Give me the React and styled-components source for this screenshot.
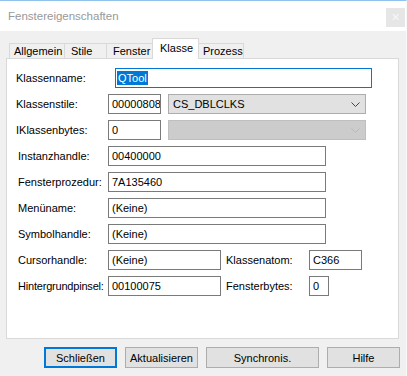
import React from 'react'
import styled, { createGlobalStyle } from 'styled-components'

const GlobalStyle = createGlobalStyle`
    html, body {
        margin: 0;
        padding: 0;
        background: #f0f0f0;
    }
    body {
        font-family: "Liberation Sans", Arial, sans-serif;
        font-size: 11px;
        color: #000;
    }
`

const tabs = [
    { name: 'Allgemein', width: 56, pad: 5 },
    { name: 'Stile', width: 43, pad: 7 },
    { name: 'Fenster', width: 49, pad: 7 },
    { name: 'Klasse', width: 47, pad: 8, active: true },
    { name: 'Prozess', width: 46, pad: 5 },
]

const buttons = [
    { name: 'Schließen', width: 73, primary: true },
    { name: 'Aktualisieren', width: 73 },
    { name: 'Synchronis.', width: 113 },
    { name: 'Hilfe', width: 73 },
]

function Chevron({ color }) {
    return (
        <svg width="9" height="5" viewBox="0 0 9 5">
            <polyline points="0.5,0.5 4.5,4.5 8.5,0.5" fill="none" stroke={color} strokeWidth="1" />
        </svg>
    )
}

function App() {
    return (
        <>
            <GlobalStyle />
            <Window>
                <TitleBar>
                    <Title>Fenstereigenschaften</Title>
                    <CloseBox>×</CloseBox>
                </TitleBar>
                <Body>
                    <TabList>
                        {tabs.map(t => (
                            <Tab key={t.name} $w={t.width} $pad={t.pad} $active={t.active}>{t.name}</Tab>
                        ))}
                    </TabList>
                    <Panel>
                        <Row>
                            <Label $w={108} $indent={9}>Klassenname:</Label>
                            <Field $w={257} $focus><Selected>QTool</Selected></Field>
                        </Row>
                        <Row>
                            <Label $indent={9}>Klassenstile:</Label>
                            <Field $w={53}>00000808</Field>
                            <Combo>
                                <span>CS_DBLCLKS</span>
                                <Chevron color="#444" />
                            </Combo>
                        </Row>
                        <Row>
                            <Label $indent={9}>IKlassenbytes:</Label>
                            <Field $w={53}>0</Field>
                            <Combo $disabled>
                                <span></span>
                                <Chevron color="#b8b8b8" />
                            </Combo>
                        </Row>
                        <Row>
                            <Label>Instanzhandle:</Label>
                            <Field $w={218}>00400000</Field>
                        </Row>
                        <Row>
                            <Label>Fensterprozedur:</Label>
                            <Field $w={218}>7A135460</Field>
                        </Row>
                        <Row>
                            <Label>Menüname:</Label>
                            <Field $w={218}>(Keine)</Field>
                        </Row>
                        <Row>
                            <Label>Symbolhandle:</Label>
                            <Field $w={218}>(Keine)</Field>
                        </Row>
                        <Row>
                            <Label>Cursorhandle:</Label>
                            <Field $w={113}>(Keine)</Field>
                            <SideLabel>Klassenatom:</SideLabel>
                            <Field $w={53}>C366</Field>
                        </Row>
                        <Row>
                            <Label $tight>Hintergrundpinsel:</Label>
                            <Field $w={113}>00100075</Field>
                            <SideLabel>Fensterbytes:</SideLabel>
                            <Field $w={20}>0</Field>
                        </Row>
                    </Panel>
                    <ButtonRow>
                        {buttons.map(b => (
                            <Button key={b.name} $w={b.width} $primary={b.primary}>{b.name}</Button>
                        ))}
                    </ButtonRow>
                </Body>
            </Window>
        </>
    )
}

const Window = styled.div`
    width: 407px;
    height: 376px;
    box-sizing: border-box;
    display: flex;
    flex-direction: column;
    background: #f0f0f0;
    border-top: 1px solid #8fc3ee;
    border-right: 1px solid #f8f8f8;
    overflow: hidden;
`

const TitleBar = styled.div`
    height: 30px;
    flex-shrink: 0;
    background: #fff;
    display: flex;
    justify-content: space-between;
    align-items: center;
    padding: 0 1px 0 8px;
`

const Title = styled.span`
    font-size: 11.5px;
    color: #999;
`

const CloseBox = styled.div`
    align-self: flex-start;
    margin-top: 7px;
    width: 19px;
    height: 19px;
    background: #e6e6e6;
    color: #f8f8f8;
    font-size: 14px;
    line-height: 18px;
    text-align: center;
`

const Body = styled.div`
    flex: 1;
    display: flex;
    flex-direction: column;
    padding: 7px 7px 0 6px;
`

const TabList = styled.div`
    display: flex;
    align-items: flex-end;
    padding-left: 3px;
`

const Tab = styled.div`
    box-sizing: border-box;
    width: ${p => p.$w}px;
    height: ${p => (p.$active ? 21 : 15)}px;
    margin-left: ${p => (p.$active ? -3 : -1)}px;
    margin-bottom: ${p => (p.$active ? -1 : 0)}px;
    &:first-child {
        margin-left: 0;
    }
    border: 1px solid #d9d9d9;
    border-bottom: none;
    background: ${p => (p.$active ? '#fff' : '#f0f0f0')};
    position: ${p => (p.$active ? 'relative' : 'static')};
    z-index: ${p => (p.$active ? 1 : 0)};
    display: flex;
    align-items: center;
    padding-left: ${p => p.$pad - 1}px;
    padding-bottom: ${p => (p.$active ? 3 : 0)}px;
    white-space: nowrap;
`

const Panel = styled.div`
    box-sizing: border-box;
    height: 281px;
    background: #fff;
    border: 1px solid #d9d9d9;
    padding-top: 9px;
    display: flex;
    flex-direction: column;
    gap: 6px;
`

const Row = styled.div`
    display: flex;
    align-items: center;
    height: 20px;
`

const Label = styled.span`
    box-sizing: border-box;
    flex-shrink: 0;
    width: ${p => p.$w || 101}px;
    padding-left: ${p => (p.$indent ?? 11)}px;
    letter-spacing: ${p => (p.$tight ? -0.2 : 0)}px;
    white-space: nowrap;
`

const SideLabel = styled.span`
    width: 83px;
    margin-left: 5px;
    white-space: nowrap;
`

const Field = styled.div`
    box-sizing: border-box;
    flex-shrink: 0;
    width: ${p => p.$w}px;
    height: 20px;
    border: 1px solid ${p => (p.$focus ? '#0078d7' : '#7a7a7a')};
    background: #fff;
    padding-left: ${p => (p.$focus ? 1 : 3)}px;
    display: flex;
    align-items: center;
    white-space: nowrap;
    overflow: hidden;
`

const Selected = styled.span`
    background: #0078d7;
    color: #fff;
    padding: 1px 1px;
`

const Combo = styled.div`
    box-sizing: border-box;
    width: 198px;
    height: 20px;
    margin-left: 7px;
    border: 1px solid ${p => (p.$disabled ? '#bfbfbf' : '#adadad')};
    background: ${p => (p.$disabled ? '#cccccc' : '#e1e1e1')};
    display: flex;
    align-items: center;
    justify-content: space-between;
    padding: 0 5px 0 4px;
`

const ButtonRow = styled.div`
    display: flex;
    justify-content: flex-end;
    gap: 8px;
    margin-top: 8px;
    margin-right: -1px;
`

const Button = styled.div`
    box-sizing: border-box;
    width: ${p => p.$w}px;
    height: 21px;
    background: #e1e1e1;
    border: ${p => (p.$primary ? '2px solid #0078d7' : '1px solid #adadad')};
    display: flex;
    align-items: center;
    justify-content: center;
    white-space: nowrap;
`

export default App
